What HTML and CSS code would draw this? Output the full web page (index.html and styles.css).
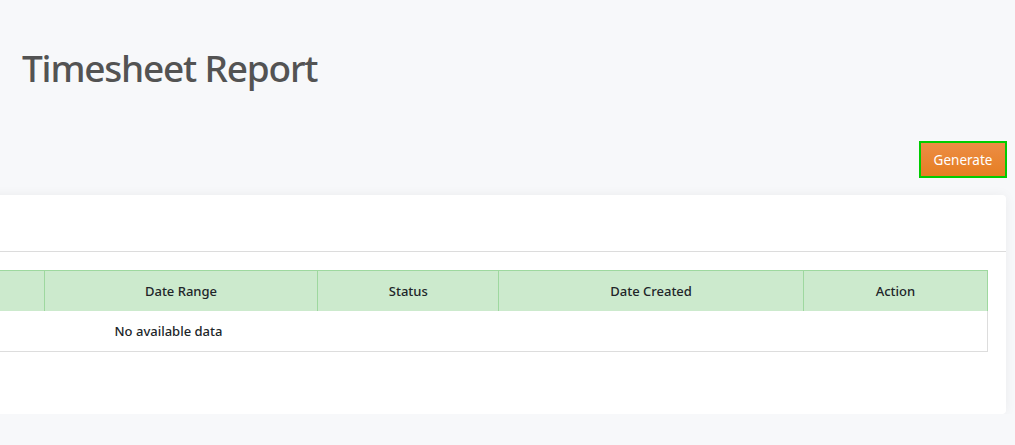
FILE: index.html
```html
<!DOCTYPE html>
<html lang="en">
<head>
  <meta charset="UTF-8">
  <meta name="viewport" content="width=device-width, initial-scale=1.0">
  <title>Timesheet Report</title>
  <link rel="stylesheet" href="styles.css">
</head>
<body>

  <div class="page-header">
    <h1>Timesheet Report</h1>
  </div>

  <div class="toolbar">
    <button class="btn-generate" type="button">Generate</button>
  </div>

  <div class="card">
    <div class="card-header"></div>
    <div class="card-body">
      <table>
        <thead>
          <tr>
            <th class="col-name"></th>
            <th class="col-range">Date Range</th>
            <th class="col-status">Status</th>
            <th class="col-created">Date Created</th>
            <th class="col-action">Action</th>
          </tr>
        </thead>
        <tbody>
          <tr>
            <td class="empty" colspan="5">No available data</td>
          </tr>
        </tbody>
      </table>
    </div>
  </div>

</body>
</html>
```

FILE: styles.css
```css
body {
  margin: 0;
  background-color: #f7f8fa;
  font-family: "Noto Sans", "Open Sans", sans-serif;
  color: #212529;
  overflow: hidden;
}
.page-header {
  padding: 38px 22px 0;
}
.page-header h1 {
  margin: 0;
  font-size: 37px;
  font-weight: 500;
  line-height: 60px;
  color: #535353;
  letter-spacing: -1.2px;
}
.toolbar {
  display: flex;
  justify-content: flex-end;
  padding: 43px 8px 0;
}
.btn-generate {
  width: 88px;
  height: 37px;
  border: 2px solid #00cc00;
  border-radius: 0;
  background: linear-gradient(#ec8d45, #e67e22);
  color: #fff;
  font-family: inherit;
  font-size: 13.5px;
  cursor: pointer;
  padding: 0;
}
.card {
  margin: 17px 9px 0 -669px;
  background-color: #fff;
  border-radius: 4px;
  box-shadow: 0 0 12px rgba(0, 0, 0, 0.05);
}
.card-header {
  height: 56px;
  border-bottom: 1px solid #dcdcdc;
}
.card-body {
  padding: 18px 18px 62px;
}
table {
  width: 100%;
  border-collapse: collapse;
  border: 1px solid #dddddd;
}
th {
  height: 40px;
  padding: 0 8px;
  background-color: #cceacd;
  border: 1px solid #9ed89f;
  border-bottom: none;
  font-size: 13px;
  font-weight: 500;
  text-align: center;
}
.col-name { width: 677px; }
.col-range { width: 256px; }
.col-status { width: 164px; }
.col-created { width: 287px; }
.col-action { width: 167px; }
td {
  height: 40px;
  padding: 0 8px;
  font-size: 13px;
  font-weight: 500;
  border-bottom: 1px solid #dddddd;
}
.empty {
  text-align: center;
}
```
